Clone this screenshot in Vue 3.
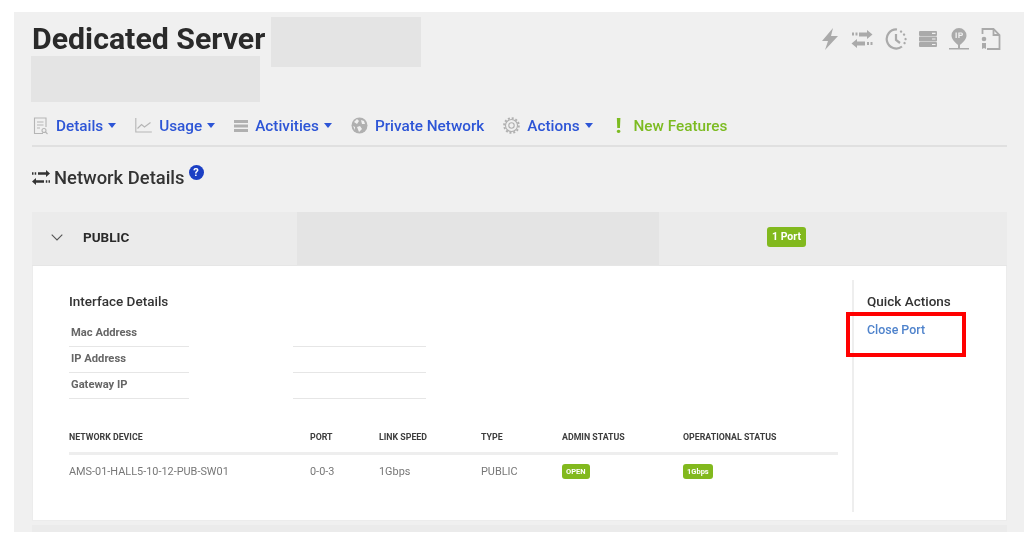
<script setup>
const navItems = [
  { label: 'Details', icon: 'details', caret: true },
  { label: 'Usage', icon: 'usage', caret: true },
  { label: 'Activities', icon: 'servers', caret: true },
  { label: 'Private Network', icon: 'globe', caret: false },
  { label: 'Actions', icon: 'gear', caret: true }
];
const interfaceRows = ['Mac Address', 'IP Address', 'Gateway IP'];
</script>

<template>
  <div class="page">
    <div class="panel">
      <header class="head">
        <div class="title-row">
          <h1 class="title">Dedicated Server</h1>
          <div class="redacted redacted-name"></div>
          <div class="tools">
            <svg width="18" height="22" viewBox="0 0 18 22"><path d="M12 0 1 13h6l-3 9 13-14h-7z" fill="#aaa" /></svg>
            <svg width="22" height="18" viewBox="0 0 22 18" fill="#aaa">
              <path d="M8 2.500h8V0l5.500 4.500L16 9V6.500H8zM14 11.500H6V9l-5.500 4.500L6 18v-2.500h8z" />
              <path d="M1 2.500h2v3H1zM4.500 2.500h2v3h-2zM16 12h2v3h-2zM19.500 12h2v3h-2z" />
            </svg>
            <svg width="22" height="22" viewBox="0 0 22 22" fill="none" stroke="#aaa" stroke-width="2.200">
              <path d="M12 1.500a9.500 9.500 0 1 0 5 17" />
              <path d="M11 6v6l4 3" />
              <path d="M16 3.500l.1.1M19 6.500l.1.1M20.500 11l.1.1M19.500 15l.1.1" stroke-linecap="round" />
            </svg>
            <svg width="18" height="16" viewBox="0 0 18 16">
              <path d="M0 1q0-1 1-1h16q1 0 1 1v3q0 1-1 1H1q-1 0-1-1zM0 6.500q0-1 1-1h16q1 0 1 1v3q0 1-1 1H1q-1 0-1-1zM0 12q0-1 1-1h16q1 0 1 1v3q0 1-1 1H1q-1 0-1-1z" fill="#aaa" />
              <path d="M13 1.800h3.500v1.200H13zM13 7.400h3.500v1.200H13zM13 12.900h3.500v1.200H13z" fill="#f0f0f0" />
            </svg>
            <svg width="20" height="22" viewBox="0 0 20 22">
              <path d="M10 0a7.500 7.500 0 0 1 7.500 7.500C17.500 12 13 15 10 18c-3-3-7.500-6-7.500-10.500A7.500 7.500 0 0 1 10 0z" fill="#aaa" />
              <path d="M0 20h20v1.500H0z" fill="#aaa" />
              <path d="M9 17h2v3H9z" fill="#aaa" />
              <path d="M6.500 4.500h1.300v5.500H6.500zM9.300 4.500h1.300v5.500H9.300zM10.600 4.500h1.800q1.600 0 1.600 1.700t-1.600 1.700h-1.800V6.800h1.500q.6 0 .6-.6t-.6-.6h-1.500z" fill="#f0f0f0" />
            </svg>
            <svg width="20" height="22" viewBox="0 0 20 22" fill="none" stroke="#aaa" stroke-width="1.800">
              <path d="M1.500 6V1h11l6 6v14H6" />
              <path d="M12.500 1v6h6" />
              <circle cx="3" cy="11" r="2.300" fill="#aaa" stroke="none" />
              <path d="M1 15h4v6l-2-1-2 1z" fill="#aaa" stroke="none" />
            </svg>
          </div>
        </div>
        <div class="redacted redacted-sub"></div>
      </header>

      <nav class="nav">
        <a v-for="item in navItems" :key="item.label" class="nav-item">
          <svg v-if="item.icon === 'details'" width="16" height="18" viewBox="0 0 16 18" fill="none" stroke="#b5b5b5" stroke-width="1.100">
            <path d="M10 16.500H1.500V1h11.500v9" />
            <path d="M4 5h6.500M4 8h6.500M4 11h3" />
            <circle cx="11" cy="13.500" r="2" />
            <path d="M12.500 15l2 2" />
          </svg>
          <svg v-else-if="item.icon === 'usage'" width="17" height="15" viewBox="0 0 17 15" fill="none" stroke="#b5b5b5" stroke-width="1.100">
            <path d="M.8 0v14h16" />
            <path d="M2.500 10.500l4-4 3 2.500 6-4.500" />
          </svg>
          <svg v-else-if="item.icon === 'servers'" width="14" height="12" viewBox="0 0 14 12" fill="#b0b0b0">
            <path d="M0 0h14v3H0zM0 4.500h14v3H0zM0 9h14v3H0z" />
          </svg>
          <svg v-else-if="item.icon === 'globe'" width="17" height="17" viewBox="0 0 17 17">
            <circle cx="8.500" cy="8.500" r="8" fill="#b0b0b0" />
            <path d="M3 5l3-3 2 2-2 3zM10 3l3 1 1 3-3 0zM6 10l3-1 2 3-3 3zM2 9l2 1 0 3z" fill="#f0f0f0" />
          </svg>
          <svg v-else-if="item.icon === 'gear'" width="17" height="17" viewBox="0 0 17 17" fill="none" stroke="#b0b0b0">
            <circle cx="8.500" cy="8.500" r="2.700" stroke-width="1.100" />
            <circle cx="8.500" cy="8.500" r="6" stroke-width="1.100" />
            <circle cx="8.500" cy="8.500" r="7.300" stroke-width="2" stroke-dasharray="2 1.820" />
          </svg>
          <span class="nav-label">{{ item.label }}</span>
          <span v-if="item.caret" class="caret"></span>
        </a>
        <a class="nav-item nav-new">
          <span class="bang">!</span>
          <span class="nav-label">New Features</span>
        </a>
      </nav>

      <h2 class="section">
        <svg width="18" height="15" viewBox="0 0 18 15" fill="#333">
          <path d="M6 2.300h8V0l4 3.500-4 3.500V4.700H6zM12 10.300H4V8l-4 3.500L4 15v-2.300h8z" />
          <path d="M0 2.300h1.500v2.400H0zM2.700 2.300h1.500v2.400H2.700zM13.800 10.300h1.500v2.400h-1.500zM16.500 10.300H18v2.400h-1.500z" />
        </svg>
        <span>Network Details</span>
        <span class="help">?</span>
      </h2>

      <section class="card">
        <div class="card-head">
          <div class="card-head-left">
            <svg width="12" height="7" viewBox="0 0 12 7" fill="none" stroke="#555" stroke-width="1.100"><path d="M.7.700 6 6l5.300-5.300" /></svg>
            <span class="card-name">PUBLIC</span>
          </div>
          <div class="redacted card-head-mid"></div>
          <div class="card-head-right"><span class="badge badge-port">1 Port</span></div>
        </div>
        <div class="card-body">
          <div class="details">
            <h3 class="sub">Interface Details</h3>
            <div v-for="row in interfaceRows" :key="row" class="iface-row">
              <div class="iface-label">{{ row }}</div>
              <div class="iface-value"></div>
            </div>
            <div class="table table-head">
              <span>NETWORK DEVICE</span>
              <span>PORT</span>
              <span>LINK SPEED</span>
              <span>TYPE</span>
              <span>ADMIN STATUS</span>
              <span>OPERATIONAL STATUS</span>
            </div>
            <div class="table table-row">
              <span>AMS-01-HALL5-10-12-PUB-SW01</span>
              <span>0-0-3</span>
              <span>1Gbps</span>
              <span>PUBLIC</span>
              <span><i class="badge badge-small">OPEN</i></span>
              <span><i class="badge badge-small">1Gbps</i></span>
            </div>
          </div>
          <aside class="quick">
            <h3 class="sub">Quick Actions</h3>
            <a class="close-port">Close Port</a>
            <div class="highlight"></div>
          </aside>
        </div>
      </section>
      <div class="card-next"></div>
    </div>
  </div>
</template>

<style scoped>
.page {
  height: 542px;
  overflow: hidden;
  background: #fff;
  padding: 12px 0 0 14px;
  box-sizing: border-box;
  font-family: Roboto, "Liberation Sans", sans-serif;
  filter: blur(0.4px);
}

.panel {
  height: 520px;
  overflow: hidden;
  background: #f0f0f0;
  padding: 5px 17px 0 18px;
  box-sizing: border-box;
}

.head {
  height: 85px;
}

.title-row {
  display: flex;
  height: 50px;
}

.title {
  margin: 0;
  font-size: 30.300px;
  font-weight: 700;
  line-height: 44px;
  color: #2a2a2a;
  width: 239px;
  white-space: nowrap;
}

.redacted {
  background: #e4e4e4;
}

.redacted-name {
  width: 150px;
  height: 50px;
}

.redacted-sub {
  width: 229px;
  height: 46px;
  margin: -11px 0 0 -1px;
  position: relative;
}

.tools {
  margin-left: auto;
  display: flex;
  align-items: center;
  gap: 12px;
  height: 44px;
  padding-right: 6px;
}

.nav {
  display: flex;
  align-items: center;
  height: 41px;
  border-bottom: 2px solid #e0e0e0;
  gap: 19px;
  padding-left: 1px;
  box-sizing: border-box;
  margin-top: 4px;
}

.nav-item {
  display: flex;
  align-items: center;
  color: #2d55d6;
  font-size: 15.300px;
}

.nav-label {
  margin-left: 7px;
  font-weight: 500;
  white-space: nowrap;
}

.caret {
  margin-left: 5px;
  border-left: 4.500px solid transparent;
  border-right: 4.500px solid transparent;
  border-top: 5px solid #2d55d6;
}

.nav-new {
  color: #7cbb21;
  margin-left: 2px;
}

.nav-new .nav-label {
  margin-left: 10px;
}

.bang {
  font-size: 20px;
  font-weight: 900;
  width: 10px;
  text-align: center;
}

.section {
  display: flex;
  align-items: center;
  gap: 4px;
  margin: 18px 0 23px;
  height: 24px;
  font-size: 18.400px;
  font-weight: 500;
  color: #333;
}

.help {
  width: 15px;
  height: 15px;
  border-radius: 50%;
  background: #1b3fc4;
  color: #fff;
  font-size: 11px;
  font-weight: 700;
  line-height: 15px;
  text-align: center;
  margin: -10px 0 0 0;
}

.card {
  width: 975px;
  background: #fff;
}

.card-head {
  display: flex;
  height: 54px;
  background: #ebebeb;
  border-bottom: 1px solid #e6e6e6;
  box-sizing: border-box;
}

.card-head-left {
  width: 265px;
  display: flex;
  align-items: center;
  padding-left: 19px;
  box-sizing: border-box;
  margin-top: -3px;
}

.card-name {
  margin-left: 20px;
  font-size: 13.500px;
  font-weight: 700;
  color: #2b2b2b;
}

.card-head-mid {
  width: 362px;
}

.card-head-right {
  flex: 1;
  padding: 13px 0 0 108px;
  box-sizing: border-box;
}

.badge {
  display: inline-block;
  background: #82b91e;
  color: #fff;
  border-radius: 3px;
  font-style: normal;
  font-weight: 700;
}

.badge-port {
  width: 39px;
  height: 20px;
  line-height: 20px;
  font-size: 10.500px;
  text-align: center;
}

.badge-small {
  height: 15px;
  line-height: 15px;
  font-size: 7.500px;
  padding: 0 4px;
  vertical-align: top;
}

.card-body {
  display: flex;
  height: 255px;
  padding: 14px 0 8px 36px;
  box-sizing: border-box;
  border: 1px solid #ececec;
  border-top: 0;
}

.details {
  width: 769px;
  padding-top: 15px;
  box-sizing: border-box;
}

.sub {
  margin: 0;
  height: 13px;
  font-size: 13.500px;
  line-height: 13px;
  font-weight: 500;
  color: #333;
  white-space: nowrap;
}

.details .sub {
  margin-bottom: 13px;
}

.iface-row {
  display: flex;
  height: 26px;
  font-size: 11.200px;
  font-weight: 700;
  color: #666;
}

.iface-label {
  width: 120px;
  border-bottom: 1px solid #e6e6e6;
  padding: 5px 0 0 2px;
  box-sizing: border-box;
}

.iface-value {
  width: 133px;
  margin-left: 104px;
  border-bottom: 1px solid #e6e6e6;
}

.table {
  display: grid;
  grid-template-columns: 241px 69px 102px 81px 121px 1fr;
  font-size: 8.800px;
}

.table-head {
  margin-top: 33px;
  height: 20px;
  font-weight: 700;
  color: #3d3d3d;
  border-bottom: 3px solid #eee;
}

.table-row {
  margin-top: 9px;
  font-size: 10.900px;
  color: #777;
  line-height: 15px;
}

.quick {
  position: relative;
  margin-left: 14px;
  padding: 0 0 0 13px;
  border-left: 2px solid #eee;
  flex: 1;
}

.quick .sub {
  margin-top: 15px;
}

.close-port {
  display: block;
  margin-top: 14px;
  font-size: 12.400px;
  font-weight: 500;
  color: #4f83cc;
}

.highlight {
  position: absolute;
  left: -8px;
  top: 32px;
  width: 120px;
  height: 45px;
  box-sizing: border-box;
  border: 4px solid #f00;
}

.card-next {
  width: 975px;
  height: 30px;
  margin-top: 4px;
  background: #ebebeb;
}
</style>
